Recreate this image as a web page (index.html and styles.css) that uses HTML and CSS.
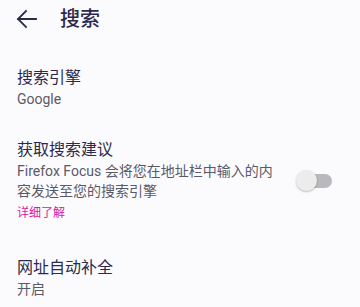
FILE: index.html
```
<!DOCTYPE html>
<html lang="zh-CN">
<head>
  <meta charset="UTF-8" />
  <title>搜索</title>
  <link rel="stylesheet" href="styles.css">
</head>
<body>

<div class="toolbar">
  <svg class="back" width="24" height="24" viewBox="0 0 24 24">
    <path d="M3 12H21M11 4L3 12L11 20" fill="none" stroke="#2b2a4c" stroke-width="1.8" stroke-linecap="square" stroke-linejoin="miter"/>
  </svg>
  <h1>搜索</h1>
</div>

<div class="prefs">
  <div class="pref">
    <div class="pref-text">
      <div class="pref-title">搜索引擎</div>
      <div class="pref-summary">Google</div>
    </div>
  </div>

  <div class="pref">
    <div class="pref-text">
      <div class="pref-title">获取搜索建议</div>
      <div class="pref-summary">Firefox Focus 会将您在地址栏中输入的内容发送至您的搜索引擎</div>
      <div class="pref-link">详细了解</div>
    </div>
    <div class="switch">
      <div class="switch-track"></div>
      <div class="switch-thumb"></div>
    </div>
  </div>

  <div class="pref">
    <div class="pref-text">
      <div class="pref-title">网址自动补全</div>
      <div class="pref-summary">开启</div>
    </div>
  </div>
</div>

</body>
</html>
```

FILE: styles.css
```
body {
  margin: 0;
  background: #fbfbfe;
  font-family: Roboto, "Noto Sans CJK SC", sans-serif;
  color: #2b2a4c;
  overflow: hidden;
}

.toolbar {
  height: 38px;
  display: flex;
  align-items: center;
  padding-left: 15px;
}

.back {
  flex: none;
}

.toolbar h1 {
  margin: 0 0 0 21px;
  font-size: 20px;
  font-weight: 500;
  line-height: 24px;
}

.prefs {
  padding-top: 14px;
}

.pref {
  display: flex;
  align-items: center;
  padding: 15px 28px 15px 17px;
}

.pref-text {
  flex: 1;
}

.pref-title {
  font-size: 16px;
  line-height: 22px;
}

.pref-summary {
  font-size: 14px;
  line-height: 20px;
  color: #5b5966;
}

.pref-link {
  font-size: 12px;
  line-height: 16px;
  margin: 4px 0 6px;
  color: #d6199e;
}

.switch {
  flex: none;
  position: relative;
  width: 36px;
  height: 22px;
  margin-left: 14px;
  margin-top: -4px;
}

.switch-track {
  position: absolute;
  right: 0;
  top: 4px;
  width: 30px;
  height: 14px;
  border-radius: 7px;
  background: #b9b9bd;
}

.switch-thumb {
  position: absolute;
  left: 0;
  top: 0;
  width: 21px;
  height: 21px;
  border-radius: 50%;
  background: #ececec;
  box-shadow: 0 1px 2px rgba(0,0,0,0.25);
}
```
